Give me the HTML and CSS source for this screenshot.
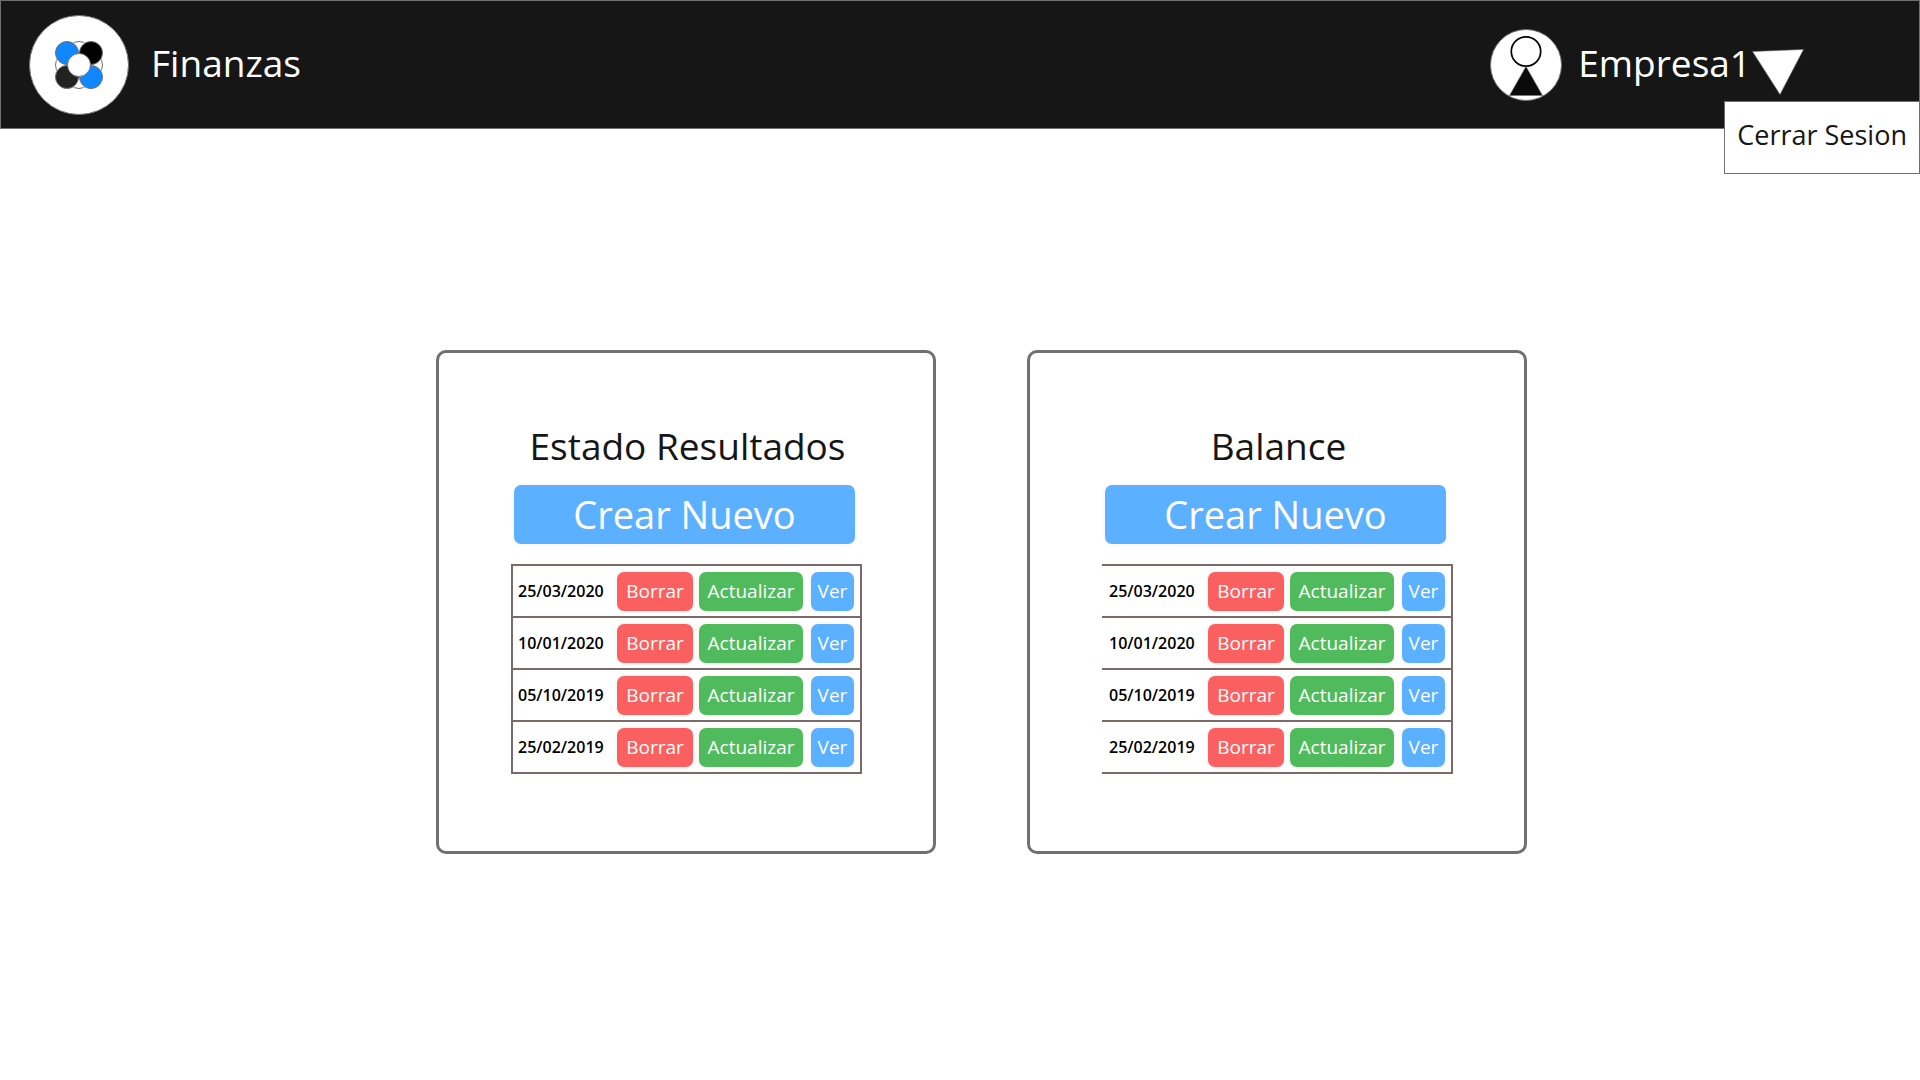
FILE: index.html
```html
<!DOCTYPE html>
<html lang="es">
<head>
<meta charset="utf-8">
<meta name="viewport" content="width=device-width, initial-scale=1">
<title>Finanzas</title>
<link rel="stylesheet" href="styles.css">
</head>
<body>
<header class="topbar">
  <a class="brand" href="#">
    <svg class="logo" viewBox="0 0 100 100" aria-hidden="true">
      <circle cx="50" cy="50" r="49.5" fill="#fff" stroke="#707070"/>
      <g fill="#fff" stroke="#707070">
        <circle cx="50" cy="38" r="11.5"/>
        <circle cx="50" cy="62" r="11.5"/>
        <circle cx="38" cy="50" r="11.5"/>
        <circle cx="62" cy="50" r="11.5"/>
        <circle cx="38" cy="38" r="11.5" fill="#1086ff"/>
        <circle cx="62" cy="38" r="11.5" fill="#000"/>
        <circle cx="38" cy="62" r="11.5" fill="#222"/>
        <circle cx="62" cy="62" r="11.5" fill="#1086ff"/>
        <circle cx="50" cy="50" r="11.5"/>
      </g>
    </svg>
    <span class="topbar-text">Finanzas</span>
  </a>
  <div class="account">
    <button class="account-toggle" type="button" aria-expanded="true">
      <svg class="avatar" viewBox="0 0 72 72" aria-hidden="true">
        <circle cx="36" cy="36" r="35.5" fill="#fff" stroke="#707070"/>
        <circle cx="36" cy="22.500" r="14.700" fill="#fff" stroke="#000" stroke-width="1.700"/>
        <path d="M36 37.500 52.500 66.500H19.500Z" fill="#0a0a0a" stroke="#707070" stroke-width=".6"/>
      </svg>
      <span class="topbar-text">Empresa1</span>
      <svg class="caret" viewBox="0 0 52 46" aria-hidden="true">
        <path d="M.5 2.500 51.500.5 28 45.500Z" fill="#fff" stroke="#707070" stroke-width=".6"/>
      </svg>
    </button>
    <a class="menu" href="#">Cerrar Sesion</a>
  </div>
</header>

<main class="panels">
  <section class="card">
    <h2 class="card-title">Estado Resultados</h2>
    <button class="btn btn-create" type="button">Crear Nuevo</button>
    <table class="records">
      <tbody>
        <tr><th scope="row">25/03/2020</th><td><div class="actions"><button class="btn btn-delete" type="button">Borrar</button><button class="btn btn-update" type="button">Actualizar</button><button class="btn btn-view" type="button">Ver</button></div></td></tr>
        <tr><th scope="row">10/01/2020</th><td><div class="actions"><button class="btn btn-delete" type="button">Borrar</button><button class="btn btn-update" type="button">Actualizar</button><button class="btn btn-view" type="button">Ver</button></div></td></tr>
        <tr><th scope="row">05/10/2019</th><td><div class="actions"><button class="btn btn-delete" type="button">Borrar</button><button class="btn btn-update" type="button">Actualizar</button><button class="btn btn-view" type="button">Ver</button></div></td></tr>
        <tr><th scope="row">25/02/2019</th><td><div class="actions"><button class="btn btn-delete" type="button">Borrar</button><button class="btn btn-update" type="button">Actualizar</button><button class="btn btn-view" type="button">Ver</button></div></td></tr>
      </tbody>
    </table>
  </section>
  <section class="card">
    <h2 class="card-title">Balance</h2>
    <button class="btn btn-create" type="button">Crear Nuevo</button>
    <table class="records records-open">
      <tbody>
        <tr><th scope="row">25/03/2020</th><td><div class="actions"><button class="btn btn-delete" type="button">Borrar</button><button class="btn btn-update" type="button">Actualizar</button><button class="btn btn-view" type="button">Ver</button></div></td></tr>
        <tr><th scope="row">10/01/2020</th><td><div class="actions"><button class="btn btn-delete" type="button">Borrar</button><button class="btn btn-update" type="button">Actualizar</button><button class="btn btn-view" type="button">Ver</button></div></td></tr>
        <tr><th scope="row">05/10/2019</th><td><div class="actions"><button class="btn btn-delete" type="button">Borrar</button><button class="btn btn-update" type="button">Actualizar</button><button class="btn btn-view" type="button">Ver</button></div></td></tr>
        <tr><th scope="row">25/02/2019</th><td><div class="actions"><button class="btn btn-delete" type="button">Borrar</button><button class="btn btn-update" type="button">Actualizar</button><button class="btn btn-view" type="button">Ver</button></div></td></tr>
      </tbody>
    </table>
  </section>
</main>
</body>
</html>
```
FILE: styles.css
```css
* {
  box-sizing: border-box;
}

body {
  margin: 0;
  background: #fff;
  color: #161616;
  font-family: "Open Sans", "Noto Sans", sans-serif;
}

button {
  font-family: inherit;
  cursor: pointer;
}

/* Top bar */
.topbar {
  display: flex;
  align-items: center;
  justify-content: space-between;
  padding: 14px 115px 13px 28px;
  border: 1px solid #707070;
  background: #161616;
  color: #fff;
  font-size: 37px;
  line-height: 52px;
}

.topbar-text {
  padding-bottom: 5px;
}

.brand {
  display: flex;
  align-items: center;
  gap: 22px;
  color: inherit;
  text-decoration: none;
}

.logo {
  width: 100px;
  height: 100px;
}

.account-toggle {
  display: flex;
  align-items: center;
  padding: 0;
  border: 0;
  background: none;
  color: inherit;
  font-size: inherit;
  line-height: inherit;
}

.avatar {
  width: 72px;
  height: 72px;
  margin-right: 16px;
}

.caret {
  width: 52px;
  height: 46px;
  margin: 14px 0 0 1px;
}

.menu {
  position: absolute;
  top: 101px;
  right: 0;
  padding: 13px 12px 18px;
  border: 1px solid #707070;
  background: #fff;
  color: #161616;
  font-size: 27px;
  line-height: 40px;
  text-decoration: none;
}

/* Cards */
.panels {
  display: flex;
  flex-wrap: wrap;
  justify-content: center;
  gap: 91px;
  padding: 221px 0 221px 43px;
}

.card {
  width: 500px;
  padding: 66px 72px 77px 75px;
  border: 3px solid #707070;
  border-radius: 10px;
}

.card-title {
  margin: 0 0 13px;
  font-size: 37px;
  font-weight: 400;
  line-height: 53px;
  text-align: center;
}

.btn {
  padding: 0;
  border: 0;
  border-radius: 7px;
  box-shadow: 0 0 0 2px #fff8f9;
  color: #fff;
  font-size: 19px;
  line-height: 39px;
}

.btn-create {
  display: block;
  width: 341px;
  background: #5bb0ff;
  font-size: 38px;
  line-height: 59px;
}

.btn-delete {
  width: 76px;
  background: #fa6060;
}

.btn-update {
  width: 104px;
  background: #50bb5d;
}

.btn-view {
  width: 43px;
  margin-left: 2px;
  background: #5bb0ff;
}

/* Saved statements */
.records {
  width: 351px;
  margin: 20px 0 0 -3px;
  border: 2px solid #7b6a68;
  border-collapse: collapse;
}

.records-open {
  border-left-color: transparent;
}

.records th,
.records td {
  padding: 0;
  border-top: 2px solid #7b6a68;
  border-bottom: 2px solid #7b6a68;
}

.records th {
  padding-left: 5px;
  color: #000;
  font-size: 16px;
  font-weight: 600;
  line-height: 24px;
  text-align: left;
}

.records td {
  width: 244px;
  padding: 6px 0 5px;
}

.actions {
  display: flex;
  gap: 6px;
}
```
